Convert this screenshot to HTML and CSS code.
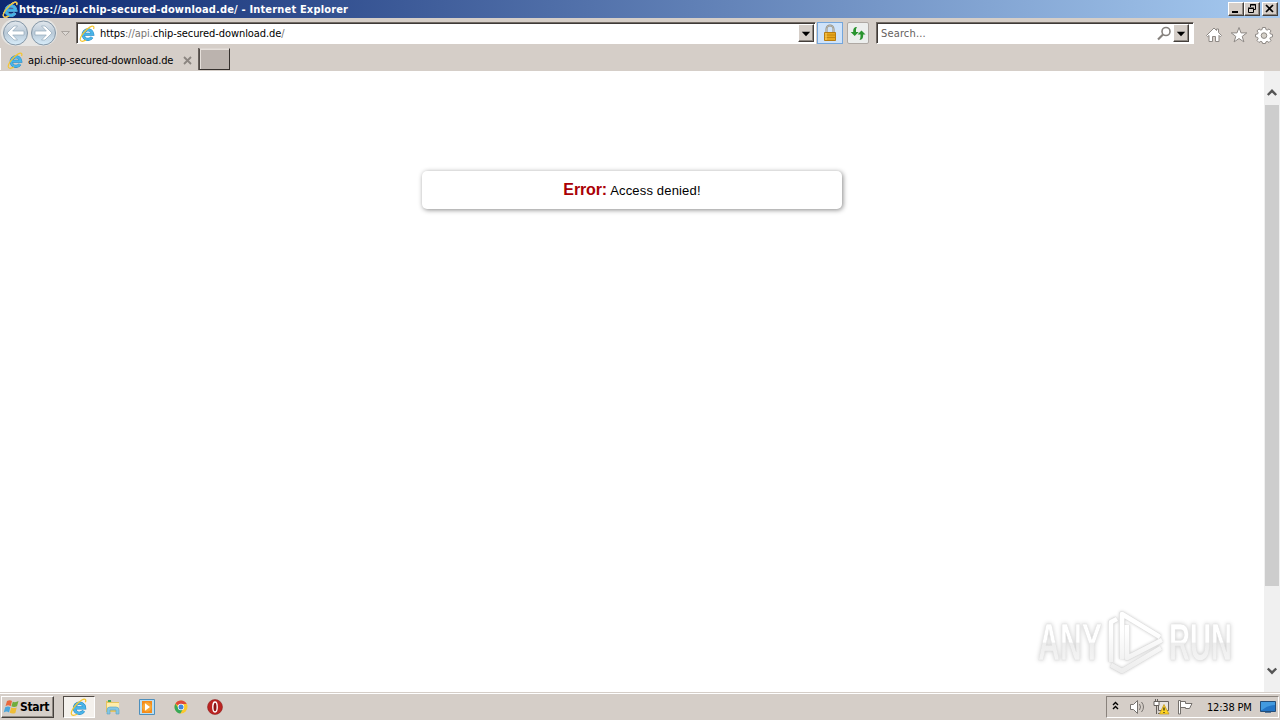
FILE: index.html
```html
<!DOCTYPE html>
<html lang="en">
<head>
<meta charset="utf-8">
<title>https://api.chip-secured-download.de/ - Internet Explorer</title>
<link rel="stylesheet" href="styles.css">
</head>
<body>
<svg class="defs" width="0" height="0" aria-hidden="true">
  <symbol id="ie" viewBox="0 0 16 16">
    <path d="M4.2 8.7H12.9A4.5 4.5 0 1 0 12.2 11.5" fill="none" stroke="#2785be" stroke-width="2.9"/>
    <path d="M4.2 8.7H12.9A4.5 4.5 0 1 0 12.2 11.5" fill="none" stroke="#48b4e9" stroke-width="2.1"/>
    <path d="M6.5 14.2C3.8 15.8 1.6 15.7 1.2 14.1.6 11 6 4.5 10.2 2c2.8-1.6 4.6-1.1 3.5 1.7" fill="none" stroke="#f4c52f" stroke-width="1.1"/>
  </symbol>
  <symbol id="down" viewBox="0 0 16 18">
    <path d="M3.2 6.5h9.6L8 11.5Z" fill="#000"/>
  </symbol>
</svg>
<div class="screen">
  <header class="titlebar">
    <svg class="title-ie" width="17" height="17"><use href="#ie"/></svg>
    <span class="title-text">https://api.chip-secured-download.de/ - Internet Explorer</span>
    <div class="window-buttons">
      <span class="raised wb"><svg width="14" height="12"><path d="M3 8h6v2H3Z"/></svg></span>
      <span class="raised wb"><svg width="14" height="12" fill="none" stroke="#000"><path d="M5.5 4V1.5h5v5H9M5 2h6M3.5 5.5h5v4h-5ZM3 5h6"/></svg></span>
      <span class="raised wb close"><svg width="14" height="12"><path d="M3 2l7 7M10 2L3 9" stroke="#000" stroke-width="1.7"/></svg></span>
    </div>
  </header>
  <div class="navbar">
    <svg class="history" width="75" height="28" viewBox="0 0 75 28">
      <defs><linearGradient id="nav" x2="0" y2="1"><stop stop-color="#e2e8ed"/><stop offset=".5" stop-color="#b9c9d7"/><stop offset="1" stop-color="#d8edfa"/></linearGradient></defs>
      <rect x="1" y="1" width="56" height="27" rx="13.5" fill="#e6e5e3"/>
      <g fill="url(#nav)" stroke="#8597a7"><circle cx="15.5" cy="15" r="12"/><circle cx="43.5" cy="15" r="12"/></g>
      <g fill="#fff" stroke="#94a9ba" stroke-width=".7"><path d="M7 15l7-7h3.5l-4.8 5H24v4H12.7l4.8 5H14Z"/><path d="M52 15l-7-7h-3.5l4.8 5H35v4h11.3l-4.8 5H45Z"/></g>
      <path d="M61.5 13.5h8l-4 4Z" fill="#ddd9d5" stroke="#aaa49f"/>
    </svg>
    <div class="field address">
      <svg width="17" height="17"><use href="#ie"/></svg>
      <span class="url">https<i>://api.</i>chip-secured-download.de<i>/</i></span>
      <span class="raised drop"><svg width="14" height="18"><use href="#down"/></svg></span>
    </div>
    <span class="lock"><svg width="16" height="18" viewBox="0 0 16 18"><path d="M4.5 9V5a3.5 3.5 0 0 1 7 0v4" fill="none" stroke="#8d8a80" stroke-width="2"/><path d="M4.5 9V5a3.5 3.5 0 0 1 7 0v4" fill="none" stroke="#ddd9c9" stroke-width=".6"/><path d="M2.5 8.5h11v8h-11Z" fill="#e7a71f" stroke="#b77c11"/><path d="M3 11h10M3 13.5h10" stroke="#c5860d"/><path d="M4 9v7" stroke="#ffd46a"/></svg></span>
    <span class="refresh"><svg width="18" height="18" viewBox="0 0 18 18" fill="#29942f"><path d="M8 3C5 3 4.2 4.7 4.2 8H1.7l4 4 4-4H7c0-2.3-.2-3.3 1-5Z"/><path d="M10.5 16c3-.4 3.7-2 3.7-5.5h2.3l-4-4-4 4h3c0 2.3 0 3.8-1 5.5Z"/></svg></span>
    <div class="field search">
      <span>Search...</span>
      <svg class="magnifier" width="15" height="15" fill="none" stroke="#85817d"><circle cx="9" cy="5.5" r="4" stroke-width="1.6"/><path d="M6 8.5l-5 5" stroke-width="2.2"/></svg>
      <span class="raised drop"><svg width="14" height="18"><use href="#down"/></svg></span>
    </div>
    <div class="tools">
      <svg width="18" height="18" viewBox="0 0 18 18"><path d="M1.5 9.5L9 2l2.5 2.5V3h2v3.5l3 3-1.2 1.2L14 9.4v6.1h-3.5v-5h-3v5H4V9.4l-1.3 1.3Z" fill="#fff" stroke="#8e8985"/></svg>
      <svg width="18" height="18" viewBox="0 0 18 18"><path d="M9 1.5l2 5.4h5.8l-4.6 3.5 1.7 5.5L9 12.5l-4.9 3.4 1.7-5.5L1.2 6.9H7Z" fill="#fff" stroke="#8e8985"/></svg>
      <svg width="18" height="18" viewBox="0 0 18 18"><path d="M7.5 1.5h3l.4 2 1.3.6 1.8-1.2 2 2-1.1 1.8.5 1.3 2.1.4v2.5l-2.1.5-.5 1.3 1.1 1.8-2 2-1.8-1.2-1.3.6-.4 1.6h-3l-.4-1.6-1.3-.6L4 16.5l-2-2 1.1-1.8-.5-1.3-2.1-.5V8.4L2.6 8l.5-1.3L2 4.9l2-2 1.8 1.2 1.3-.6Z" fill="#fff" stroke="#8e8985"/><circle cx="9" cy="9.6" r="2.8" fill="#d4d0c8" stroke="#8e8985"/></svg>
    </div>
  </div>
  <div class="tabs">
    <div class="tab">
      <svg width="17" height="17"><use href="#ie"/></svg><span>api.chip-secured-download.de</span>
      <svg class="tab-close" width="9" height="9"><path d="M1 1l7 7M8 1L1 8" stroke="#8b8580" stroke-width="1.8"/></svg>
    </div>
    <div class="new-tab"></div>
  </div>
  <main class="viewport">
    <div class="page"><div class="error"><b>Error:</b> Access denied!</div></div>
    <div class="scrollbar">
      <svg width="16" height="34"><path d="M3.8 24l4.2-4.2 4.2 4.2" fill="none" stroke="#555" stroke-width="2.4"/></svg>
      <div class="thumb"></div>
      <svg class="scroll-down" width="16" height="34"><path d="M3.8 10.5L8 14.7l4.2-4.2" fill="none" stroke="#555" stroke-width="2.4"/></svg>
    </div>
    <svg class="watermark" width="220" height="72" viewBox="0 0 220 72">
      <defs>
        <linearGradient id="wm" gradientUnits="userSpaceOnUse" x1="0" y1="18" x2="0" y2="55"><stop offset=".52" stop-color="#fff"/><stop offset=".54" stop-color="#ededed"/><stop offset="1" stop-color="#f4f4f4"/></linearGradient>
        <linearGradient id="mark" gradientUnits="userSpaceOnUse" x1="0" y1="8" x2="0" y2="66"><stop offset=".3" stop-color="#fff"/><stop offset="1" stop-color="#ededed"/></linearGradient>
      </defs>
      <g class="wm-letters" fill="url(#wm)">
        <text x="6" y="55" textLength="64" lengthAdjust="spacingAndGlyphs">ANY</text>
        <text x="137" y="55" textLength="63" lengthAdjust="spacingAndGlyphs">RUN</text>
      </g>
      <g class="wm-logo" fill="none">
        <path id="logo-lines" d="M79 57V17l6-3M90 54V9l38 23M95 20v33l35-18M79 60l11 6 39-23"/>
        <use class="wm-fill" href="#logo-lines"/>
      </g>
    </svg>
  </main>
  <footer class="taskbar">
    <div class="raised start"><svg width="18" height="17" viewBox="0 0 18 17"><path d="M5 2q3-1.5 5 0L8.7 7.2Q6 5.5 3.5 7.2Z" fill="#e9683c"/><path d="M10.8 2.8q3 1 5.7-.8L15 7.3q-3 1.5-5.6 0Z" fill="#70ad3e"/><path d="M3.2 8.2q3-1.5 5.2 0L7 13.5q-2.5-1.8-5.3 0Z" fill="#4ba6dc"/><path d="M9.2 8.5q3 1.2 5.5 0L13.4 14q-3 1.2-5.7-.3Z" fill="#efbd38"/></svg><b>Start</b></div>
    <div class="task-active"><svg width="18" height="18"><use href="#ie"/></svg></div>
    <div class="launch">
      <svg width="16" height="16" viewBox="0 0 16 16"><path d="M1 2h5l1 1h7v10H1Z" fill="#e5c45f"/><path d="M2 4h12v7H2Z" fill="#ffedaa"/><path d="M3 2h3" stroke="#42a661" stroke-width="2"/><path d="M2 15v-4q0-3 3-3h6q3 0 3 3v4h-3v-4H5v4Z" fill="#83c7e4" stroke="#5ba1c5" stroke-width=".6"/></svg>
      <svg width="16" height="16" viewBox="0 0 16 16"><path d="M.5.5h15v15H.5Z" fill="#b8def3" stroke="#4e8fbc"/><path d="M3 2h10v12H3Z" fill="#f48b1b"/><circle cx="8" cy="8" r="4.7" fill="#f8a735"/><path d="M6 4.2l5 3.8-5 3.8Z" fill="#fff"/></svg>
      <svg width="16" height="16" viewBox="0 0 16 16"><circle cx="8" cy="8" r="6.5" fill="#fbc82d"/><path d="M8 8L2.4 4.7A6.5 6.5 0 0 1 13.7 5H8Z" fill="#df493b"/><path d="M2.4 4.7A6.5 6.5 0 0 0 7.3 14.5L10 10 6 10Z" fill="#37a85a"/><circle cx="8" cy="8" r="3.2" fill="#fff"/><circle cx="8" cy="8" r="2.5" fill="#4286dc"/></svg>
      <svg width="16" height="16" viewBox="0 0 16 16"><circle cx="8" cy="8" r="7.5" fill="#bb2422" stroke="#841817" stroke-width=".5"/><ellipse cx="8" cy="8" rx="2.2" ry="5" fill="#8d1314" stroke="#fff" stroke-width="1.4"/></svg>
    </div>
    <div class="tray">
      <svg class="chevrons" width="7" height="10" fill="none" stroke="#000" stroke-width="1.4"><path d="M1 4l2.5-2.5L6 4M1 8l2.5-2.5L6 8"/></svg>
      <svg class="speaker" width="17" height="16" viewBox="0 0 17 16" fill="none" stroke="#77736f"><path d="M1.5 5.5h3l4-4v13l-4-4h-3Z" fill="#fff"/><path d="M10.5 5q2 3 0 6M12.5 3q4 5 0 10"/></svg>
      <svg class="network" width="17" height="16" viewBox="0 0 17 16"><path d="M5.5 2.5h10v9h-10ZM5 14.5h8" fill="#e8e5df" stroke="#68645f"/><path d="M1 2.5h5v4H1ZM2.5 0v3M4.5 0v3M3.5 7v8" fill="#fff" stroke="#65615c"/><path d="M11 5.5l5 9.5H6.5Z" fill="#ffd521" stroke="#bd931c" stroke-width=".7"/><path d="M11 8.5v3M11 13v1" stroke="#222" stroke-width="1.2"/></svg>
      <svg class="flag" width="17" height="16" viewBox="0 0 17 16" fill="#fff" stroke="#74706c"><path d="M1.5 15V1.5h2V15ZM3.5 2.5h5v2h6.5l-2.5 5H8.5v-1h-5Z"/></svg>
      <time>12:38 PM</time>
      <svg class="desktop" width="16" height="16" viewBox="0 0 16 16"><path d="M.5 2.5h15v10H.5Z" fill="#2375c6" stroke="#244d77"/><path d="M1 3h14v3Q8 6 2 11H1Z" fill="#429adf"/><path d="M5 13.5h6" stroke="#56779b"/></svg>
    </div>
  </footer>
</div>
</body>
</html>
```
FILE: styles.css
```css
* { box-sizing: border-box; }
body { margin: 0; overflow: hidden; background: #d5cec8; color: #000; font: 11px "DejaVu Sans Condensed", "DejaVu Sans", sans-serif; font-stretch: condensed; }
svg { display: block; flex: none; }
.defs { position: absolute; }
.screen { width: 1280px; height: 720px; display: flex; flex-direction: column; }
.raised { background: #d5cec8; border: 1px solid; border-color: #fff #443f3b #443f3b #fff; box-shadow: inset -1px -1px #8f8983; }
.titlebar { height: 18px; flex: none; display: flex; align-items: center; padding: 0 2px; background: linear-gradient(90deg, #0c2770, #a6caf0); color: #fff; }
.title-ie { filter: drop-shadow(0 0 .5px #fff); }
.title-text { font-weight: bold; white-space: nowrap; width: 340px; letter-spacing: .17px; }
.window-buttons { display: flex; margin-left: auto; }
.wb { width: 16px; height: 14px; }
.close { margin-left: 2px; }
.navbar { height: 30px; flex: none; display: flex; align-items: flex-start; }
.history { margin-right: 1px; }
.field { height: 22px; background: #fff; margin-top: 4px; border: 1px solid; border-color: #716a64 #fff #fff #716a64; box-shadow: inset 1px 1px #3f3a37; display: flex; align-items: center; }
.address { width: 740px; padding-left: 2px; }
.address .drop { margin-right: 1px; }
.url { margin-left: 4px; padding-top: 1px; letter-spacing: -.08px; flex: 1; }
.url i { font-style: normal; color: #77736f; }
.drop { width: 16px; height: 18px; display: flex; justify-content: center; }
.lock { width: 26px; height: 22px; margin: 4px 0 0 1px; background: #cfe3fa; border: 1px solid #74a6dc; display: grid; place-items: center; }
.refresh { width: 22px; height: 22px; margin: 4px 0 0 4px; background: #eceeed; border: 1px solid #afa9a4; border-radius: 2px; display: grid; place-items: center; }
.search { width: 318px; margin-left: 7px; padding: 0 4px 0 4px; color: #65615e; letter-spacing: .15px; }
.search span:first-child { padding-top: 1px; }
.magnifier { margin: 0 1px 0 auto; }
.tools { display: flex; gap: 7px; margin: 8px 0 0 11px; }
.tabs { height: 23px; flex: none; display: flex; align-items: flex-start; }
.tab { width: 199px; height: 22px; display: flex; align-items: center; padding: 2px 6px 0; border-left: 1px solid #fff; border-right: 1px solid #67605b; letter-spacing: -.12px; }
.tab span { margin-left: 4px; width: 149px; white-space: nowrap; }
.tab-close { margin-left: 6px; }
.new-tab { width: 31px; height: 22px; background: #bbb3ae; border: 1px solid; border-color: #ddd7d2 #35302d #35302d #514b47; box-shadow: inset 1px 1px #e6e0db; }
.viewport { height: 621px; flex: none; display: flex; background: #fff; position: relative; }
.page { width: 1264px; padding-top: 100px; }
.error { width: 420px; height: 38px; margin: 0 auto; border-radius: 5px; box-shadow: 1px 1px 5px #888; text-align: center; line-height: 38px; font-family: "Liberation Sans", Arial, sans-serif; font-size: 13px; letter-spacing: .17px; }
.error b { font-size: 16px; color: #aa0005; letter-spacing: -.12px; }
.scrollbar { width: 16px; background: #f0f0f0; display: flex; flex-direction: column; }
.thumb { width: 14px; height: 481px; margin-left: 1px; background: #cdcdcd; }
.scroll-down { margin-top: auto; }
.watermark { position: absolute; left: 1032px; top: 534px; overflow: visible; }
.wm-letters { font: bold 51px "Liberation Sans Narrow", "Liberation Sans", sans-serif; stroke: #e2e2e2; stroke-width: .6; filter: drop-shadow(0 0 2px #ccc); }
.wm-logo { stroke: #dedede; stroke-width: 5.5; stroke-linejoin: round; filter: drop-shadow(0 0 1.5px #ccc); }
.wm-fill { stroke: url(#mark); stroke-width: 4.5; }
.taskbar { height: 28px; flex: none; display: flex; align-items: flex-start; padding-top: 3px; border-top: 1px solid #d5cec8; box-shadow: inset 0 1px #fff; }
.start { height: 22px; width: 53px; margin-left: 1px; display: flex; align-items: center; font-size: 12px; letter-spacing: -.3px; }
.task-active { width: 32px; height: 22px; margin-left: 9px; background: #f4f1ed; border: 1px solid; border-color: #514b46 #fff #fff #514b46; display: grid; place-items: center; }
.launch { display: flex; gap: 18px; padding: 3px 0 0 10px; }
.tray { width: 173px; height: 22px; margin-left: auto; margin-right: 1px; border: 1px solid; border-color: #89827c #fff #fff #89827c; display: flex; align-items: center; }
.chevrons { margin: -3px 0 0 5px; }
.speaker { margin-left: 10px; }
.network { margin-left: 7px; }
.flag { margin-left: 7px; }
time { margin-left: 13px; width: 49px; white-space: nowrap; letter-spacing: -.2px; }
.desktop { margin-left: 4px; }
```
